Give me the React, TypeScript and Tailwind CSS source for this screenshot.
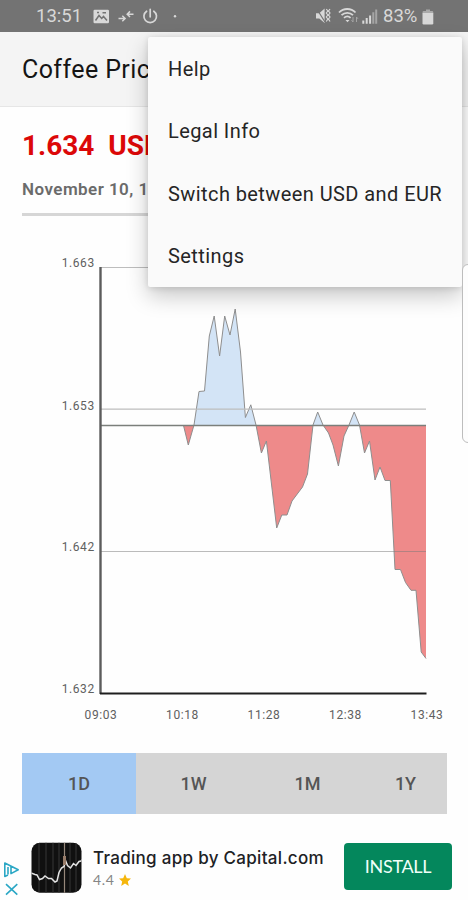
import React, { useState } from "react";

interface PricePoint {
  x: number;
  y: number;
}

interface AxisLabel {
  text: string;
  pos: number;
}

const BASELINE = 425.5;

const menuItems = ["Help", "Legal Info", "Switch between USD and EUR", "Settings"];

const prices: PricePoint[] = [
  { x: 183.5, y: 425.5 },
  { x: 188.3, y: 445 },
  { x: 194, y: 425 },
  { x: 199, y: 391.5 },
  { x: 204.5, y: 391 },
  { x: 209.3, y: 336 },
  { x: 214.2, y: 316 },
  { x: 219.6, y: 356 },
  { x: 224.7, y: 316 },
  { x: 230, y: 335 },
  { x: 235.2, y: 309 },
  { x: 240.5, y: 352 },
  { x: 245.4, y: 417.5 },
  { x: 250.8, y: 404.8 },
  { x: 256, y: 425 },
  { x: 261.4, y: 453 },
  { x: 266.4, y: 441 },
  { x: 276.7, y: 528 },
  { x: 281.8, y: 515 },
  { x: 287, y: 515 },
  { x: 292, y: 501 },
  { x: 302.5, y: 487 },
  { x: 307.5, y: 474 },
  { x: 313, y: 425 },
  { x: 317.7, y: 412 },
  { x: 323, y: 425 },
  { x: 328.5, y: 433 },
  { x: 333, y: 445 },
  { x: 338.4, y: 466 },
  { x: 344, y: 436 },
  { x: 349, y: 425 },
  { x: 354.2, y: 412 },
  { x: 359.5, y: 425 },
  { x: 364.5, y: 453 },
  { x: 369.5, y: 441 },
  { x: 375, y: 480 },
  { x: 380, y: 467 },
  { x: 385, y: 480.5 },
  { x: 390.3, y: 480.5 },
  { x: 395, y: 569.5 },
  { x: 400.5, y: 569.5 },
  { x: 405.5, y: 582.5 },
  { x: 411, y: 590.3 },
  { x: 416, y: 590.3 },
  { x: 421.2, y: 652 },
  { x: 426, y: 658.5 },
];

const yLabels: AxisLabel[] = [
  { text: "1.663", pos: 267.4 },
  { text: "1.653", pos: 409.6 },
  { text: "1.642", pos: 551.4 },
  { text: "1.632", pos: 693.4 },
];

const xLabels: AxisLabel[] = [
  { text: "09:03", pos: 101 },
  { text: "10:18", pos: 182.5 },
  { text: "11:28", pos: 264 },
  { text: "12:38", pos: 345.5 },
  { text: "13:43", pos: 427 },
];

const ranges = [
  { label: "1D", className: "w-[114px]" },
  { label: "1W", className: "w-[115px]" },
  { label: "1M", className: "w-[113px]" },
  { label: "1Y", className: "w-[83px]" },
];

const StatusBar: React.FC = () => (
  <div className="flex h-8 items-center bg-[#737373] pt-px pl-9 text-[#d8d8d8]">
    <span className="w-[57px] text-[18.5px] leading-none">13:51</span>
    <svg width="86" height="20" viewBox="93 7 86 20" fill="none" stroke="#d8d8d8">
      <rect x="93.5" y="9.8" width="15.5" height="13.4" rx="1.2" fill="#d8d8d8" stroke="none" />
      <path d="M95.5 20.5l3.5-5 2.7 3 1.8-2 3.5 4" stroke="#737373" strokeWidth="1.5" />
      <path d="M97 12.5h2M102.5 12.8h3.5" stroke="#737373" strokeWidth="1.4" />
      <path d="M118.5 18.5h6.5m-2.7-2.8 2.8 2.8-2.8 2.8M133.5 14.2h-6m2.5-2.8-2.8 2.8 2.8 2.8" strokeWidth="1.5" />
      <path d="M146.6 11.2a6.3 6.3 0 1 0 7.2 0M150.2 9.3v7.5" strokeWidth="1.7" strokeLinecap="round" />
      <circle cx="175" cy="16.3" r="1.2" fill="#d8d8d8" stroke="none" />
    </svg>
    <svg className="ml-[135px]" width="66" height="20" viewBox="314 7 66 20" fill="none" stroke="#d8d8d8">
      <path d="M316 13.2h3.3l5.3-4.8v14.5l-5.3-4.5H316z" fill="#d8d8d8" stroke="none" />
      <path d="M316.5 8.5l8.5 13.5" stroke="#737373" strokeWidth="1.2" />
      <path d="M326.3 9l1.5 2-1.5 2 1.5 2-1.5 2 1.5 2-1.5 2.5M330 9l-1.5 2 1.5 2-1.5 2 1.5 2-1.5 2 1.5 2.5" strokeWidth="1.2" />
      <path d="M339 12.5c4.5-4.7 12-4.7 16.5 0M341.5 15.2c3.3-3.2 8.3-3.2 11.5 0M344 17.8c2-1.8 4.6-1.8 6.6 0" strokeWidth="1.8" />
      <path d="M345.5 20h4l-2 2.3z" fill="#d8d8d8" stroke="none" />
      <path d="M353 17v5m-1.5-1.8 1.5 1.8M356.5 22v-5m1.5 1.8-1.5-1.8" stroke="#a5a5a5" />
      <path d="M363.3 20.5v3.2M366.7 18v5.7M370.1 15.5v8.2" strokeWidth="2" />
      <path d="M373.3 12.3v11.4M376.2 9.5v14.2" stroke="#a5a5a5" strokeWidth="2" />
    </svg>
    <span className="ml-[3px] w-[37px] text-[18.5px] leading-none">83%</span>
    <svg className="ml-[2px]" width="13" height="18" viewBox="0 0 13 18" fill="#d8d8d8">
      <path d="M.5 4.2Q.5 3 1.7 3H4V1.5h4V3h2.1q1.2 0 1.2 1.2v1H.5z" fill="#aaaaaa" />
      <path d="M.5 5h10.8v10.3q0 1.2-1.2 1.2H1.7Q.5 16.5.5 15.3z" />
    </svg>
  </div>
);

const PriceChart: React.FC = () => {
  const line = prices.map((p) => `${p.x},${p.y}`).join(" ");
  const area = `${line} 426,${BASELINE}`;

  return (
    <svg className="block" width="468" height="500" viewBox="0 240 468 500">
      <defs>
        <clipPath id="above">
          <rect x="100" y="240" width="327" height={BASELINE - 240} />
        </clipPath>
        <clipPath id="below">
          <rect x="100" y={BASELINE} width="327" height="270" />
        </clipPath>
      </defs>
      <polygon points={area} fill="#d3e4f6" clipPath="url(#above)" />
      <polygon points={area} fill="#ee8a8a" clipPath="url(#below)" />
      <polyline points={line} fill="none" stroke="#8e8e8e" strokeWidth="1" />

      {/* grid lines */}
      <path d="M101 267.5h325M101 409.2h325" stroke="#bdbdbd" strokeWidth="1.2" />
      <path d="M101 551.5h325" stroke="#777" strokeOpacity="0.5" strokeWidth="1.2" />
      <path d={`M101 ${BASELINE}h325`} stroke="#7b7f7b" strokeWidth="1.7" />

      {/* axes */}
      <path d="M100.5 267v427" stroke="#5c5c5c" strokeWidth="2.4" />
      <path d="M100 693.5h326.5" stroke="#1e1e1e" strokeWidth="2.2" />

      <g fill="#606060" fontSize="12" letterSpacing="0.6">
        {yLabels.map((label) => (
          <text key={label.text} x="94.8" y={label.pos} textAnchor="end">
            {label.text}
          </text>
        ))}
        {xLabels.map((label) => (
          <text key={label.text} x={label.pos} y="719.4" textAnchor="middle">
            {label.text}
          </text>
        ))}
      </g>
    </svg>
  );
};

const AdBanner: React.FC = () => (
  <div className="flex h-[70px] items-start">
    <svg className="mt-[18px] ml-[3px] shrink-0" width="18" height="36" viewBox="3 861 18 36" fill="none" stroke="#2ba7c5" strokeWidth="1.6">
      <path d="M8 875l-3.2 1.5V863l13.4 6.8-7.2 3.8v-6.8" strokeLinejoin="round" />
      <path d="M8 867v7.5" />
      <path d="M6 884.2l11.3 10.5M17.3 884.2L6 894.7" />
    </svg>
    <svg className="-mt-px ml-[10px] shrink-0" width="51" height="52" viewBox="0 0 51 52">
      <defs>
        <clipPath id="tile">
          <rect x="0.5" y="0.7" width="50" height="50" rx="8.5" />
        </clipPath>
      </defs>
      <g clipPath="url(#tile)">
        <rect width="51" height="52" fill="#101010" />
        <path d="M8 0v52M15 0v52M22 0v52M28 0v52M39 0v52M45 0v52" stroke="#363636" />
        <path d="M33.5 0v52" stroke="#96877a" strokeWidth="1.2" />
        <path
          d="M0 31l4 1.5 2 .5 2.5 4.5 3-1 2.5-2.5 3.5 2.5h3l3.5 3.5 2-1 2-8.500 2.500-4.500 2.500-1.500 1.500-6 2 5 3 2.500 3-4.500 2.500 2 3-4 2-.5 3.500-4"
          fill="none"
          stroke="#e3e3e3"
          strokeWidth="1.5"
        />
        <path d="M33.5 14v9" stroke="#987c69" strokeWidth="3" />
      </g>
    </svg>
    <div className="ml-[11px] w-[251px] shrink-0 pt-[4px]">
      <p className="font-['Inter','Liberation_Sans',sans-serif] text-[17px] leading-[22px] font-medium tracking-[0.3px] whitespace-nowrap text-[#202124]">
        Trading app by Capital.com
      </p>
      <div className="flex items-center font-['Lato','Liberation_Sans',sans-serif] text-[14px] leading-[21px] tracking-[0.7px] text-[#858585]">
        <span className="w-[26px]">4.4</span>
        <svg width="12" height="12" viewBox="0 0 24 24" fill="#f5b60b">
          <path d="M12 0l3.6 8.3 8.4.8-6.4 5.8 2 8.9-7.6-4.6-7.6 4.6 2-8.9L0 9.1l8.4-.8z" />
        </svg>
      </div>
    </div>
    <button className="h-[47px] w-[108px] shrink-0 rounded-[4px] bg-[#04875c] pb-px font-['Lato','Liberation_Sans',sans-serif] text-[18px] tracking-[-0.3px] text-[#f0fff9]">
      INSTALL
    </button>
  </div>
);

const App: React.FC = () => {
  const [activeRange, setActiveRange] = useState("1D");

  return (
    <div className="relative h-[900px] w-[468px] overflow-hidden bg-[#fefefe] font-['Roboto','Liberation_Sans',sans-serif]">
      <StatusBar />
      <header className="flex h-[75px] items-center border-b border-[#e6e6e6] bg-[#f4f4f4] pl-[22px]">
        <h1 className="text-[25px] leading-none tracking-[0.4px] whitespace-nowrap text-[#151515]">
          Coffee Price
        </h1>
      </header>

      <section className="mx-[22px] h-[109px] border-b-[3px] border-[#d6d6d6]">
        <p className="pt-[22px] text-[28px] leading-[34px] font-bold whitespace-pre text-[#dc0808]">
          1.634  USD
        </p>
        <p className="mt-[15px] text-[17px] leading-[22px] font-semibold tracking-[0.45px] text-[#6b6b6b]">
          November 10, 13:43
        </p>
      </section>

      <div className="mt-6">
        <PriceChart />
      </div>

      <div className="mt-[13px] mr-[21px] ml-[22px] flex h-[61px] bg-[#d5d5d5]">
        {ranges.map((range) => (
          <button
            key={range.label}
            onClick={() => setActiveRange(range.label)}
            className={`${range.className} text-[18px] font-medium text-[#555] ${
              activeRange === range.label ? "bg-[#a3c9f3]" : ""
            }`}
          >
            {range.label}
          </button>
        ))}
      </div>

      <div className="mt-[29px]">
        <AdBanner />
      </div>

      {/* overflow menu */}
      <ul className="absolute top-[37px] left-[148px] h-[250px] w-[314px] rounded-[2px] bg-[#fafafa] shadow-[0_9px_22px_rgba(0,0,0,0.22),0_1px_6px_rgba(0,0,0,0.12)]">
        {menuItems.map((item) => (
          <li
            key={item}
            className="flex h-[62.3px] items-center pt-[2px] pl-5 text-[20px] tracking-[0.42px] whitespace-nowrap text-[#252525]"
          >
            {item}
          </li>
        ))}
      </ul>

      {/* edge panel handle */}
      <div className="absolute top-[264px] left-[462px] h-[179px] w-4 rounded-[6px] border border-[#bdbdbd] bg-[#fdfdfd]" />
    </div>
  );
};

export default App;
